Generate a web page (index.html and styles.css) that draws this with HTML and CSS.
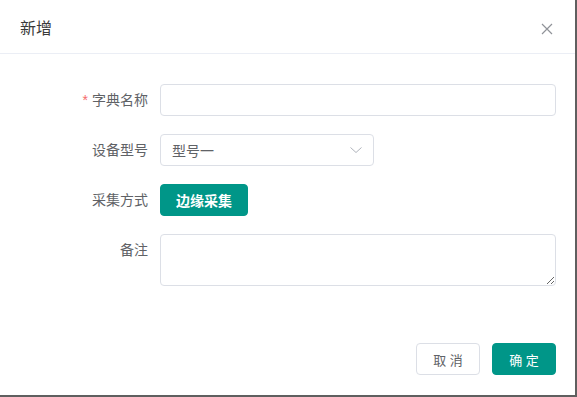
FILE: index.html
```html
<!DOCTYPE html>
<html lang="zh-CN">
<head>
  <meta charset="UTF-8" />
  <title>新增</title>
  <link rel="stylesheet" href="styles.css">
</head>
<body>
  <div class="dialog">
    <div class="dialog-header">
      <span class="dialog-title">新增</span>
      <button class="dialog-close" aria-label="关闭">
        <svg width="12" height="12" viewBox="0 0 12 12"><path d="M1 1 L11 11 M11 1 L1 11" stroke="#909399" stroke-width="1.2" fill="none"/></svg>
      </button>
    </div>

    <form class="dialog-body">
      <div class="form-item">
        <label class="form-label"><span class="required">*</span>字典名称</label>
        <div class="form-content">
          <input class="input" type="text">
        </div>
      </div>
      <div class="form-item">
        <label class="form-label">设备型号</label>
        <div class="form-content">
          <div class="select">
            <span>型号一</span>
            <svg width="14" height="14" viewBox="0 0 14 14"><path d="M1.5 4.5 L7 9.5 L12.5 4.5" stroke="#b0b4bc" stroke-width="1" fill="none"/></svg>
          </div>
        </div>
      </div>
      <div class="form-item">
        <label class="form-label">采集方式</label>
        <div class="form-content">
          <button type="button" class="btn btn-primary btn-collect">边缘采集</button>
        </div>
      </div>
      <div class="form-item">
        <label class="form-label">备注</label>
        <div class="form-content">
          <textarea class="textarea"></textarea>
        </div>
      </div>
    </form>

    <div class="dialog-footer">
      <button type="button" class="btn btn-default">取 消</button>
      <button type="button" class="btn btn-primary">确 定</button>
    </div>
  </div>
</body>
</html>
```

FILE: styles.css
```css
* {
  margin: 0;
  padding: 0;
  box-sizing: border-box;
  font-family: "Helvetica Neue", "Liberation Sans", "Noto Sans CJK SC", sans-serif;
}
body {
  background: #5f5f5f;
  width: 577px;
  height: 397px;
}
.dialog {
  width: 575px;
  height: 395px;
  background: #fff;
  display: flex;
  flex-direction: column;
}
.dialog-header {
  height: 54px;
  padding: 0 22px 0 20px;
  border-bottom: 1px solid #ebeef5;
  display: flex;
  align-items: center;
  justify-content: space-between;
}
.dialog-title {
  font-size: 16px;
  color: #3a3a3a;
}
.dialog-close {
  border: none;
  background: none;
  width: 12px;
  height: 12px;
  margin-top: 4px;
  display: flex;
}
.dialog-body {
  padding: 30px 19px 0 0;
  display: flex;
  flex-direction: column;
  gap: 18px;
}
.form-item {
  display: flex;
  align-items: flex-start;
}
.form-label {
  width: 160px;
  padding-right: 12px;
  text-align: right;
  font-size: 14px;
  line-height: 32px;
  color: #606266;
}
.required {
  color: #f56c6c;
  margin-right: 4px;
}
.form-content {
  flex: 1;
}
.input {
  width: 100%;
  height: 32px;
  border: 1px solid #dcdfe6;
  border-radius: 4px;
  padding: 0 11px;
  font-size: 14px;
  outline: none;
}
.select {
  width: 214px;
  height: 32px;
  border: 1px solid #dcdfe6;
  border-radius: 4px;
  padding: 0 10px 0 11px;
  display: flex;
  align-items: center;
  justify-content: space-between;
  font-size: 14px;
  color: #606266;
}
.textarea {
  display: block;
  width: 100%;
  height: 52px;
  border: 1px solid #dcdfe6;
  border-radius: 4px;
  padding: 5px 11px;
  font-size: 14px;
  resize: vertical;
  outline: none;
}
.btn {
  height: 32px;
  border-radius: 4px;
  font-size: 13px;
  cursor: pointer;
}
.btn-primary {
  background: #009688;
  border: 1px solid #009688;
  color: #fff;
}
.btn-default {
  background: #fff;
  border: 1px solid #dcdfe6;
  color: #606266;
}
.btn-collect {
  width: 88px;
  font-size: 14px;
  font-weight: 600;
}
.dialog-footer {
  margin-top: auto;
  padding: 0 19px 20px;
  display: flex;
  justify-content: flex-end;
  gap: 12px;
}
.dialog-footer .btn {
  width: 64px;
}
```
